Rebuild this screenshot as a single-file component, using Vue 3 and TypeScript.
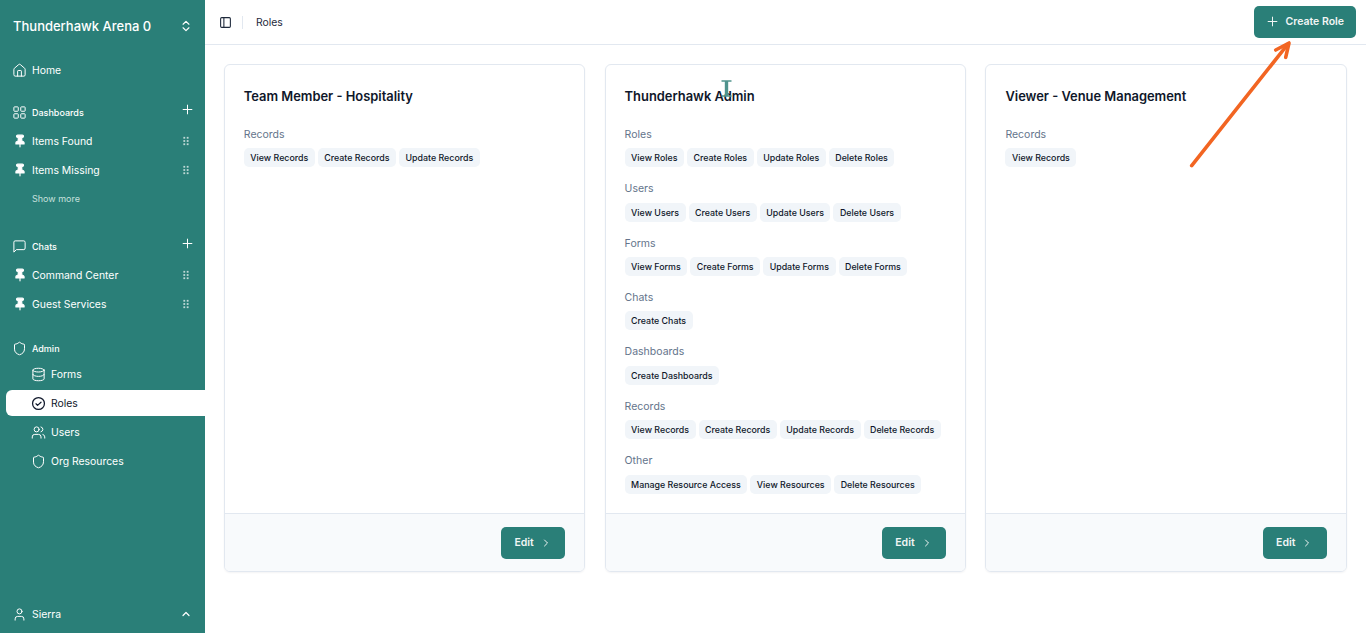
<script setup lang="ts">
interface PermGroup {
  label: string;
  perms: string[];
}
interface Role {
  name: string;
  groups: PermGroup[];
}

const crud = (noun: string) => ["View", "Create", "Update", "Delete"].map((v) => `${v} ${noun}`);

const roles: Role[] = [
  {
    name: "Team Member - Hospitality",
    groups: [{ label: "Records", perms: ["View Records", "Create Records", "Update Records"] }],
  },
  {
    name: "Thunderhawk Admin",
    groups: [
      { label: "Roles", perms: crud("Roles") },
      { label: "Users", perms: crud("Users") },
      { label: "Forms", perms: crud("Forms") },
      { label: "Chats", perms: ["Create Chats"] },
      { label: "Dashboards", perms: ["Create Dashboards"] },
      { label: "Records", perms: crud("Records") },
      { label: "Other", perms: ["Manage Resource Access", "View Resources", "Delete Resources"] },
    ],
  },
  {
    name: "Viewer - Venue Management",
    groups: [{ label: "Records", perms: ["View Records"] }],
  },
];

const pinnedDashboards = ["Items Found", "Items Missing"];
const pinnedChats = ["Command Center", "Guest Services"];
</script>

<template>
  <div class="app">
    <aside class="sidebar">
      <div class="org">
        <span class="org-name">Thunderhawk Arena 0</span>
        <svg class="icon-org" viewBox="0 0 24 24" fill="none" stroke="currentColor" stroke-width="2" stroke-linecap="round" stroke-linejoin="round">
          <path d="m7 15 5 5 5-5" />
          <path d="m7 9 5-5 5 5" />
        </svg>
      </div>

      <nav class="nav">
        <div class="row home">
          <svg class="icon" viewBox="0 0 24 24" fill="none" stroke="currentColor" stroke-width="1.6" stroke-linecap="round" stroke-linejoin="round">
            <path d="M15 21v-8a1 1 0 0 0-1-1h-4a1 1 0 0 0-1 1v8" />
            <path d="M3 10a2 2 0 0 1 .7-1.5l7-6a2 2 0 0 1 2.6 0l7 6a2 2 0 0 1 .7 1.5v9a2 2 0 0 1-2 2H5a2 2 0 0 1-2-2z" />
          </svg>
          <span>Home</span>
        </div>

        <div class="section-head first">
          <svg class="icon" viewBox="0 0 24 24" fill="none" stroke="currentColor" stroke-width="1.6" stroke-linejoin="round">
            <rect x="3" y="3" width="7" height="7" rx="1" />
            <rect x="14" y="3" width="7" height="7" rx="1" />
            <rect x="14" y="14" width="7" height="7" rx="1" />
            <rect x="3" y="14" width="7" height="7" rx="1" />
          </svg>
          <span class="section-label">Dashboards</span>
          <svg class="plus" viewBox="0 0 24 24" fill="none" stroke="currentColor" stroke-width="1.6" stroke-linecap="round">
            <path d="M5 12h14" />
            <path d="M12 5v14" />
          </svg>
        </div>
        <div v-for="item in pinnedDashboards" :key="item" class="row">
          <svg class="icon pin" viewBox="0 0 24 24" fill="currentColor" stroke="currentColor" stroke-width="2" stroke-linecap="round" stroke-linejoin="round">
            <path d="M12 17v5" />
            <path d="M9 10.8a2 2 0 0 1-1.1 1.8l-1.8.9A2 2 0 0 0 5 15.2V17h14v-1.8a2 2 0 0 0-1.1-1.8l-1.8-.9a2 2 0 0 1-1.1-1.8V6h1a2 2 0 0 0 0-4H8a2 2 0 0 0 0 4h1z" />
          </svg>
          <span class="grow">{{ item }}</span>
          <svg class="grip" viewBox="0 0 8 12" fill="currentColor">
            <rect x="0.5" y="0.5" width="2.4" height="2.4" />
            <rect x="5" y="0.5" width="2.4" height="2.4" />
            <rect x="0.5" y="4.8" width="2.4" height="2.4" />
            <rect x="5" y="4.8" width="2.4" height="2.4" />
            <rect x="0.5" y="9.1" width="2.4" height="2.4" />
            <rect x="5" y="9.1" width="2.4" height="2.4" />
          </svg>
        </div>
        <div class="show-more">Show more</div>

        <div class="section-head chats">
          <svg class="icon" viewBox="0 0 24 24" fill="none" stroke="currentColor" stroke-width="1.6" stroke-linecap="round" stroke-linejoin="round">
            <path d="M21 15a2 2 0 0 1-2 2H7l-4 4V5a2 2 0 0 1 2-2h14a2 2 0 0 1 2 2z" />
          </svg>
          <span class="section-label">Chats</span>
          <svg class="plus" viewBox="0 0 24 24" fill="none" stroke="currentColor" stroke-width="1.6" stroke-linecap="round">
            <path d="M5 12h14" />
            <path d="M12 5v14" />
          </svg>
        </div>
        <div v-for="item in pinnedChats" :key="item" class="row">
          <svg class="icon pin" viewBox="0 0 24 24" fill="currentColor" stroke="currentColor" stroke-width="2" stroke-linecap="round" stroke-linejoin="round">
            <path d="M12 17v5" />
            <path d="M9 10.8a2 2 0 0 1-1.1 1.8l-1.8.9A2 2 0 0 0 5 15.2V17h14v-1.8a2 2 0 0 0-1.1-1.8l-1.8-.9a2 2 0 0 1-1.1-1.8V6h1a2 2 0 0 0 0-4H8a2 2 0 0 0 0 4h1z" />
          </svg>
          <span class="grow">{{ item }}</span>
          <svg class="grip" viewBox="0 0 8 12" fill="currentColor">
            <rect x="0.5" y="0.5" width="2.4" height="2.4" />
            <rect x="5" y="0.5" width="2.4" height="2.4" />
            <rect x="0.5" y="4.8" width="2.4" height="2.4" />
            <rect x="5" y="4.8" width="2.4" height="2.4" />
            <rect x="0.5" y="9.1" width="2.4" height="2.4" />
            <rect x="5" y="9.1" width="2.4" height="2.4" />
          </svg>
        </div>

        <div class="section-head admin">
          <svg class="icon" viewBox="0 0 24 24" fill="none" stroke="currentColor" stroke-width="1.6" stroke-linecap="round" stroke-linejoin="round">
            <path d="M20 13c0 5-3.5 7.5-7.66 8.95a1 1 0 0 1-.67-.01C7.5 20.5 4 18 4 13V6a1 1 0 0 1 1-1c2 0 4.5-1.2 6.24-2.72a1.17 1.17 0 0 1 1.52 0C14.51 3.81 17 5 19 5a1 1 0 0 1 1 1z" />
          </svg>
          <span class="section-label">Admin</span>
        </div>
        <div class="row sub">
          <svg class="icon" viewBox="0 0 24 24" fill="none" stroke="currentColor" stroke-width="1.6" stroke-linecap="round" stroke-linejoin="round">
            <ellipse cx="12" cy="5" rx="9" ry="3" />
            <path d="M3 5v14a9 3 0 0 0 18 0V5" />
            <path d="M3 12a9 3 0 0 0 18 0" />
          </svg>
          <span>Forms</span>
        </div>
        <div class="row sub active">
          <svg class="icon" viewBox="0 0 24 24" fill="none" stroke="currentColor" stroke-width="2" stroke-linecap="round" stroke-linejoin="round">
            <circle cx="12" cy="12" r="9.5" />
            <path d="m8 12.5 2.5 2.5 5.5-5" />
          </svg>
          <span>Roles</span>
        </div>
        <div class="row sub">
          <svg class="icon" viewBox="0 0 24 24" fill="none" stroke="currentColor" stroke-width="1.6" stroke-linecap="round" stroke-linejoin="round">
            <path d="M16 21v-2a4 4 0 0 0-4-4H6a4 4 0 0 0-4 4v2" />
            <circle cx="9" cy="7" r="4" />
            <path d="M22 21v-2a4 4 0 0 0-3-3.87" />
            <path d="M16 3.13a4 4 0 0 1 0 7.75" />
          </svg>
          <span>Users</span>
        </div>
        <div class="row sub">
          <svg class="icon" viewBox="0 0 24 24" fill="none" stroke="currentColor" stroke-width="1.6" stroke-linecap="round" stroke-linejoin="round">
            <path d="M20 13c0 5-3.5 7.5-7.66 8.95a1 1 0 0 1-.67-.01C7.5 20.5 4 18 4 13V6a1 1 0 0 1 1-1c2 0 4.5-1.2 6.24-2.72a1.17 1.17 0 0 1 1.52 0C14.51 3.81 17 5 19 5a1 1 0 0 1 1 1z" />
          </svg>
          <span>Org Resources</span>
        </div>
      </nav>

      <div class="row user">
        <svg class="icon" viewBox="0 0 24 24" fill="none" stroke="currentColor" stroke-width="1.6" stroke-linecap="round" stroke-linejoin="round">
          <path d="M19 21v-2a4 4 0 0 0-4-4H9a4 4 0 0 0-4 4v2" />
          <circle cx="12" cy="7" r="4" />
        </svg>
        <span class="grow">Sierra</span>
        <svg class="chev-up" viewBox="0 0 24 24" fill="none" stroke="currentColor" stroke-width="2.4" stroke-linecap="round" stroke-linejoin="round">
          <path d="m6 15 6-6 6 6" />
        </svg>
      </div>
    </aside>

    <div class="main">
      <header class="topbar">
        <svg class="panel-icon" viewBox="0 0 24 24" fill="none" stroke="currentColor" stroke-width="2" stroke-linecap="round" stroke-linejoin="round">
          <rect x="3" y="3" width="18" height="18" rx="2" />
          <path d="M9 3v18" />
        </svg>
        <span class="divider"></span>
        <span class="crumb">Roles</span>
        <button type="button" class="btn create">
          <svg class="btn-plus" viewBox="0 0 24 24" fill="none" stroke="currentColor" stroke-width="1.6" stroke-linecap="round">
            <path d="M5 12h14" />
            <path d="M12 5v14" />
          </svg>
          Create Role
        </button>
      </header>

      <main class="content">
        <section v-for="role in roles" :key="role.name" class="card">
          <div class="card-body">
            <h2 class="card-title">{{ role.name }}</h2>
            <div v-for="group in role.groups" :key="group.label" class="group">
              <div class="group-label">{{ group.label }}</div>
              <div class="chips">
                <span v-for="perm in group.perms" :key="perm" class="chip">{{ perm }}</span>
              </div>
            </div>
          </div>
          <footer class="card-foot">
            <button type="button" class="btn edit">
              Edit
              <svg class="btn-chev" viewBox="0 0 24 24" fill="none" stroke="currentColor" stroke-width="2" stroke-linecap="round" stroke-linejoin="round">
                <path d="m9 18 6-6-6-6" />
              </svg>
            </button>
          </footer>
        </section>
      </main>
    </div>

    <!-- I-beam mouse cursor caught in the capture -->
    <svg class="cursor" viewBox="0 0 11 17" fill="none" stroke="#4f938d" stroke-width="1.5">
      <path d="M0.5 1h10" />
      <path d="M5.5 1v15" stroke-width="3.4" />
      <path d="M0.5 16h10" />
    </svg>

    <!-- annotation arrow drawn over the page -->
    <svg class="arrow" viewBox="0 0 110 135" fill="none" stroke="#f26522" stroke-width="3.6" stroke-linecap="round" stroke-linejoin="round">
      <path d="M4.7 129.7 101 8" />
      <path d="M88.7 14 102 7 98.7 21.3" />
    </svg>
  </div>
</template>

<style>
html,
body {
  margin: 0;
  background: #fff;
}
</style>

<style scoped>
.app {
  position: relative;
  display: flex;
  height: 633px;
  overflow: hidden;
  font-family: Inter, "Noto Sans", sans-serif;
  color: #0f172a;
}

.sidebar {
  flex: 0 0 205px;
  display: flex;
  flex-direction: column;
  background: #2a7f78;
  color: #fff;
}

.org {
  display: flex;
  align-items: center;
  justify-content: space-between;
  height: 51px;
  padding: 0 12px 0 13px;
}

.org-name {
  font-size: 13px;
  font-weight: 500;
  white-space: nowrap;
}

.icon-org {
  width: 14px;
  height: 14px;
  flex: none;
}

.nav {
  flex: 1;
  display: flex;
  flex-direction: column;
  padding-left: 6px;
}

.row {
  display: flex;
  align-items: center;
  height: 26px;
  margin-bottom: 3px;
  padding: 0 16px 0 6px;
  font-size: 10.4px;
  white-space: nowrap;
}

.home {
  margin-top: 6px;
}

.icon {
  flex: none;
  width: 15px;
  height: 15px;
  margin-right: 5px;
}

.pin {
  width: 14px;
  height: 14px;
  margin-left: 1px;
}

.grow {
  flex: 1;
}

.grip {
  width: 6px;
  height: 10px;
  opacity: 0.7;
}

.section-head {
  position: relative;
  display: flex;
  align-items: center;
  height: 26px;
  margin-bottom: 3px;
  padding: 0 14px 0 6px;
}

.section-head.first {
  margin-top: 13px;
}

.section-head.chats {
  margin-top: 18px;
}

.section-head.admin {
  margin-top: 15px;
  margin-bottom: 0;
}

.section-label {
  flex: 1;
  font-size: 9px;
  font-weight: 500;
}

.plus {
  position: absolute;
  right: 10px;
  top: 2.5px;
  width: 15px;
  height: 15px;
}

.show-more {
  height: 26px;
  line-height: 26px;
  margin-bottom: 3px;
  padding-left: 26px;
  font-size: 9px;
  color: #c6e0dd;
}

.sub {
  padding-left: 25px;
}

.active {
  background: #fff;
  color: #0f172a;
  border-radius: 6px 0 0 6px;
}

.user {
  margin: 0 0 6px 6px;
  padding-right: 13.5px;
}

.chev-up {
  width: 12px;
  height: 12px;
  flex: none;
}

.main {
  flex: 1;
  min-width: 0;
  display: flex;
  flex-direction: column;
}

.topbar {
  flex: none;
  display: flex;
  align-items: center;
  height: 44px;
  padding: 0 10px 0 14px;
  border-bottom: 1px solid #e2e8f0;
}

.panel-icon {
  width: 13px;
  height: 13px;
  color: #1e293b;
}

.divider {
  width: 1px;
  height: 13px;
  margin: 0 13px 0 10px;
  background: #e2e8f0;
}

.crumb {
  flex: 1;
  font-size: 10.4px;
  color: #1e293b;
}

.btn {
  display: inline-flex;
  align-items: center;
  border: 0;
  border-radius: 5px;
  background: #2a7f78;
  color: #f1f5f4;
  font-family: inherit;
  font-weight: 600;
  font-size: 10.5px;
}

.create {
  height: 32px;
  padding: 0 12px 0 11px;
  margin-top: -1px;
}

.btn-plus {
  width: 15px;
  height: 15px;
  margin-right: 5px;
}

.content {
  flex: 1;
  display: grid;
  grid-template-columns: repeat(3, 1fr);
  gap: 19.4px;
  align-items: start;
  padding: 19.2px 19.2px 0 18.8px;
}

.card {
  display: flex;
  flex-direction: column;
  height: 508px;
  box-sizing: border-box;
  border: 1px solid #e2e8f0;
  border-radius: 6px;
  box-shadow: 0 1px 2px rgba(15, 23, 42, 0.05);
  overflow: hidden;
}

.card-body {
  flex: 1;
  padding: 23px 19px 0;
}

.card-title {
  margin: 0 0 20.7px;
  font-size: 12.9px;
  line-height: 17px;
  font-weight: 600;
}

.group {
  height: 54.4px;
}

.group-label {
  height: 18px;
  line-height: 18px;
  margin-bottom: 4.3px;
  font-size: 10.5px;
  color: #64748b;
}

.chips {
  display: flex;
  gap: 3px;
}

.chip {
  height: 19px;
  line-height: 19px;
  padding: 0 6.5px;
  border-radius: 5px;
  background: #f1f5f9;
  font-size: 8.85px;
  font-weight: 500;
  white-space: nowrap;
}

.card-foot {
  display: flex;
  justify-content: flex-end;
  align-items: center;
  height: 57px;
  padding-right: 19px;
  border-top: 1px solid #e2e8f0;
  background: #f8fafc;
}

.edit {
  height: 32px;
  padding: 0 13.4px;
}

.btn-chev {
  width: 12px;
  height: 12px;
  margin-left: 6px;
}

.cursor {
  position: absolute;
  left: 721px;
  top: 80px;
  width: 11px;
  height: 17px;
}

.arrow {
  position: absolute;
  left: 1187px;
  top: 36px;
  width: 110px;
  height: 135px;
}
</style>
